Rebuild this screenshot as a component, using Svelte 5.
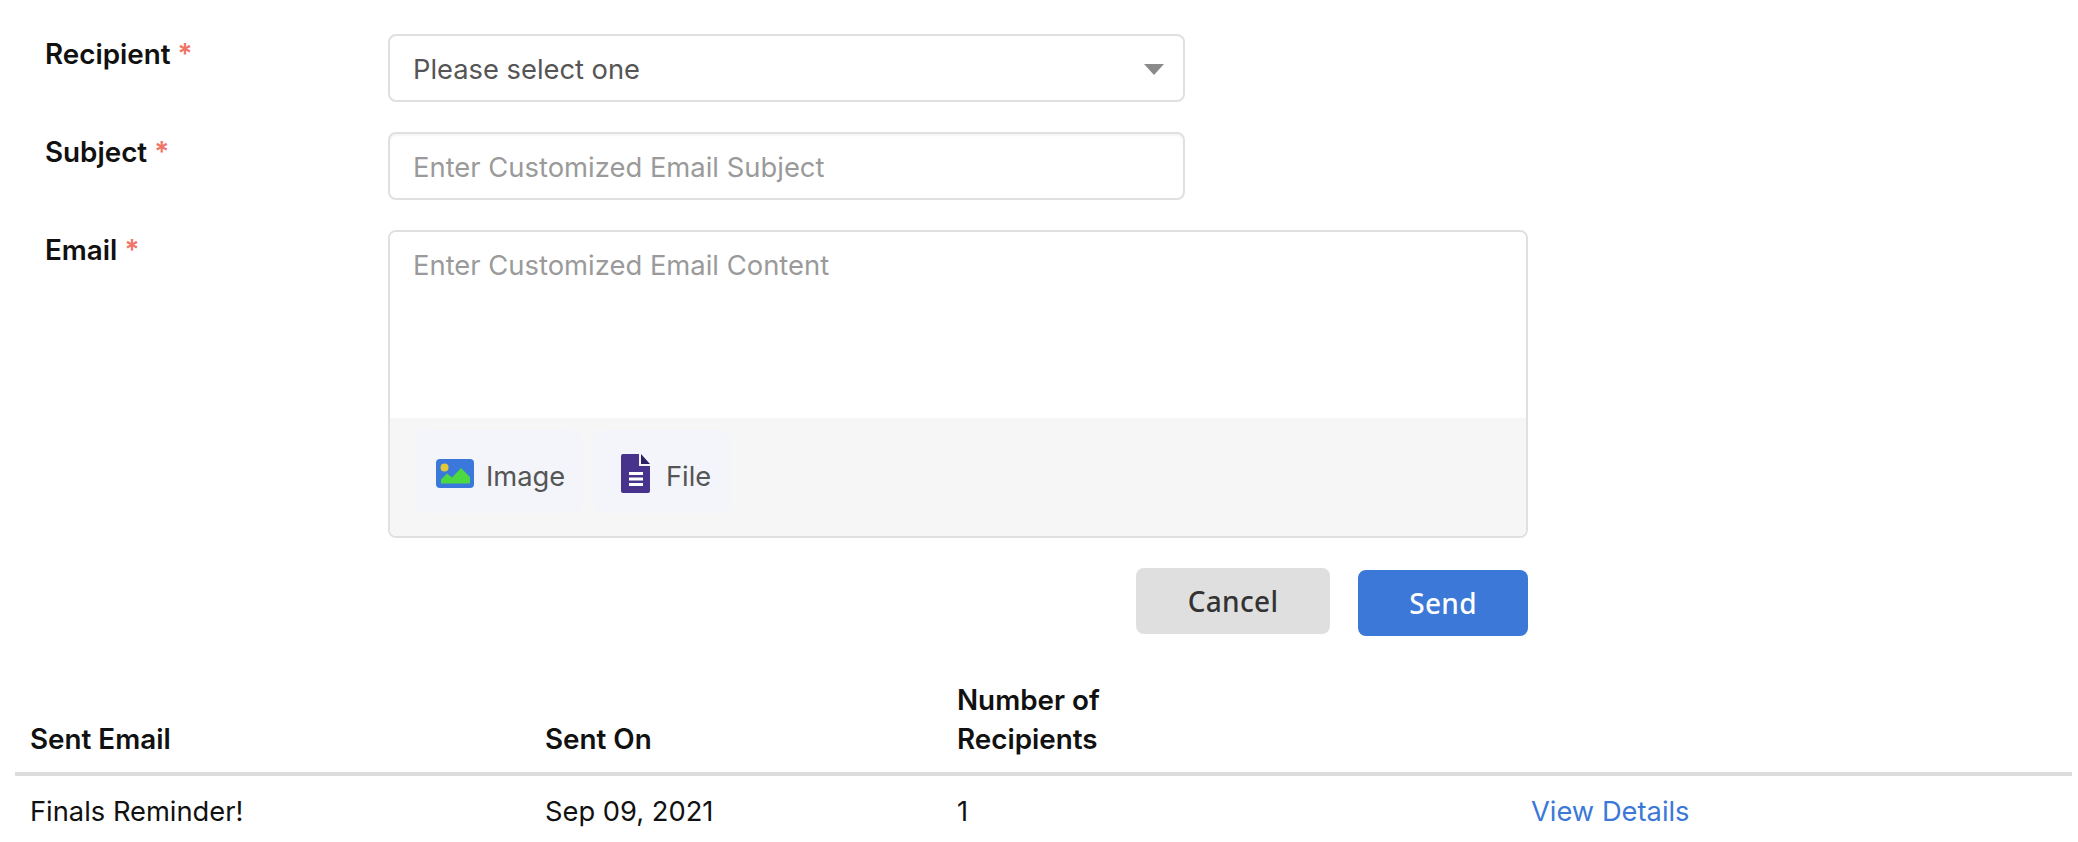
<script lang="ts">
	const rows = [{ title: 'Finals Reminder!', sentOn: 'Sep 09, 2021', count: 1 }];
</script>

<div class="page">
	<form class="form" onsubmit={(e) => e.preventDefault()}>
		<div class="field">
			<span class="label">Recipient <span class="req">*</span></span>
			<div class="control select">
				<span>Please select one</span>
				<span class="caret"></span>
			</div>
		</div>
		<div class="field">
			<span class="label">Subject <span class="req">*</span></span>
			<input class="control input" placeholder="Enter Customized Email Subject" />
		</div>
		<div class="field">
			<span class="label">Email <span class="req">*</span></span>
			<div class="editor">
				<textarea placeholder="Enter Customized Email Content"></textarea>
				<div class="toolbar">
					<button type="button" class="chip chip-image">
						<svg width="38" height="29" viewBox="0 0 38 29">
							<rect width="38" height="29" rx="4" fill="#3b78dc" />
							<circle cx="8.5" cy="8.5" r="4" fill="#e3c93a" />
							<path d="M5 24.500v-4l6-6 5 4 9-9.500 9 9v6.500z" fill="#4bd840" />
						</svg>
						Image
					</button>
					<button type="button" class="chip chip-file">
						<svg width="29" height="39" viewBox="0 0 29 39">
							<path d="M2 0h16v12h11v25a2 2 0 0 1-2 2H2a2 2 0 0 1-2-2V2a2 2 0 0 1 2-2z" fill="#47338c" />
							<path d="M20 0l9 10h-9z" fill="#2b1f66" />
							<path d="M8 18h14v3H8zM8 23.500h14v3H8zM8 29h14v3H8z" fill="#fff" />
						</svg>
						File
					</button>
				</div>
			</div>
		</div>
		<div class="actions">
			<button type="button" class="btn cancel">Cancel</button>
			<button type="submit" class="btn send">Send</button>
		</div>
	</form>

	<table>
		<thead>
			<tr>
				<th class="col-title">Sent Email</th>
				<th class="col-date">Sent On</th>
				<th class="col-count">Number of<br />Recipients</th>
				<th></th>
			</tr>
		</thead>
		<tbody>
			{#each rows as row}
				<tr>
					<td>{row.title}</td>
					<td>{row.sentOn}</td>
					<td>{row.count}</td>
					<td><a href="#details">View Details</a></td>
				</tr>
			{/each}
		</tbody>
	</table>
</div>

<style>
	:global(body) {
		margin: 0;
		background: #fff;
	}

	.page {
		font-family: Inter, "Liberation Sans", sans-serif;
		font-size: 27.3px;
		color: #111;
		height: 842px;
		overflow: hidden;
		padding-top: 34px;
		box-sizing: border-box;
	}

	.form {
		width: 1528px;
		padding-left: 45px;
		box-sizing: border-box;
	}

	.field {
		display: flex;
		margin-bottom: 30px;
	}

	.label {
		width: 343px;
		flex-shrink: 0;
		font-size: 27.8px;
		font-weight: 600;
		line-height: 40px;
	}

	.req {
		color: #f07467;
	}

	.control {
		width: 797px;
		height: 68px;
		box-sizing: border-box;
		border: 2px solid #e0e0e0;
		border-radius: 8px;
		padding: 2px 23px 0;
		font: inherit;
		background: #fff;
	}

	.select {
		display: flex;
		align-items: center;
		justify-content: space-between;
		color: #555;
	}

	.caret {
		width: 0;
		height: 0;
		border-left: 10px solid transparent;
		border-right: 10px solid transparent;
		border-top: 11px solid #8a8a8a;
		margin-right: -4px;
	}

	.input {
		display: block;
		outline: none;
		color: #555;
		font-size: 27.4px;
		box-shadow: inset 0 2px 2px rgba(0, 0, 0, 0.04);
	}

	.input::placeholder,
	textarea::placeholder {
		color: #9a9a9a;
		opacity: 1;
	}

	.editor {
		width: 1140px;
		height: 308px;
		box-sizing: border-box;
		border: 2px solid #e0e0e0;
		border-radius: 8px;
		overflow: hidden;
		display: flex;
		flex-direction: column;
	}

	textarea {
		display: block;
		flex: 1;
		border: none;
		outline: none;
		resize: none;
		font: inherit;
		font-size: 27.4px;
		padding: 16px 23px;
		box-sizing: border-box;
		width: 100%;
	}

	.toolbar {
		height: 118px;
		flex-shrink: 0;
		background: #f6f6f6;
		display: flex;
		gap: 10px;
		padding: 12px 25px 0;
		box-sizing: border-box;
	}

	.chip {
		display: flex;
		align-items: center;
		height: 83px;
		padding: 10px 0 0;
		border: none;
		border-radius: 10px;
		background: #f3f5fa;
		font: inherit;
		color: #555;
	}

	.chip-image {
		width: 168px;
		gap: 12px;
		padding-left: 21px;
	}

	.chip-file {
		width: 137px;
		gap: 16px;
		padding-left: 28px;
	}

	.chip svg {
		display: block;
		margin-top: -7px;
	}

	.actions {
		display: flex;
		justify-content: flex-end;
		align-items: flex-start;
		gap: 28px;
	}

	.btn {
		border: none;
		border-radius: 8px;
		height: 66px;
		font-family: "Noto Sans", sans-serif;
		font-size: 28px;
		font-weight: 500;
		letter-spacing: 0.3px;
	}

	.cancel {
		width: 194px;
		background: #dfdfdf;
		color: #333;
	}

	.send {
		width: 170px;
		margin-top: 2px;
		background: #3b78d8;
		color: #fff;
	}

	table {
		border-collapse: collapse;
		table-layout: fixed;
		width: 2057px;
		margin: 45px 0 0 15px;
	}

	th {
		text-align: left;
		vertical-align: bottom;
		font-size: 27.8px;
		font-weight: 600;
		line-height: 39px;
		padding: 0 0 13px 15px;
		border-bottom: 4px solid #dcdcdc;
	}

	td {
		padding: 16px 0 0 15px;
		line-height: 39px;
	}

	.col-title {
		width: 500px;
	}

	.col-date {
		width: 397px;
	}

	.col-count {
		width: 559px;
	}

	a {
		color: #3b78d8;
		text-decoration: none;
	}
</style>
